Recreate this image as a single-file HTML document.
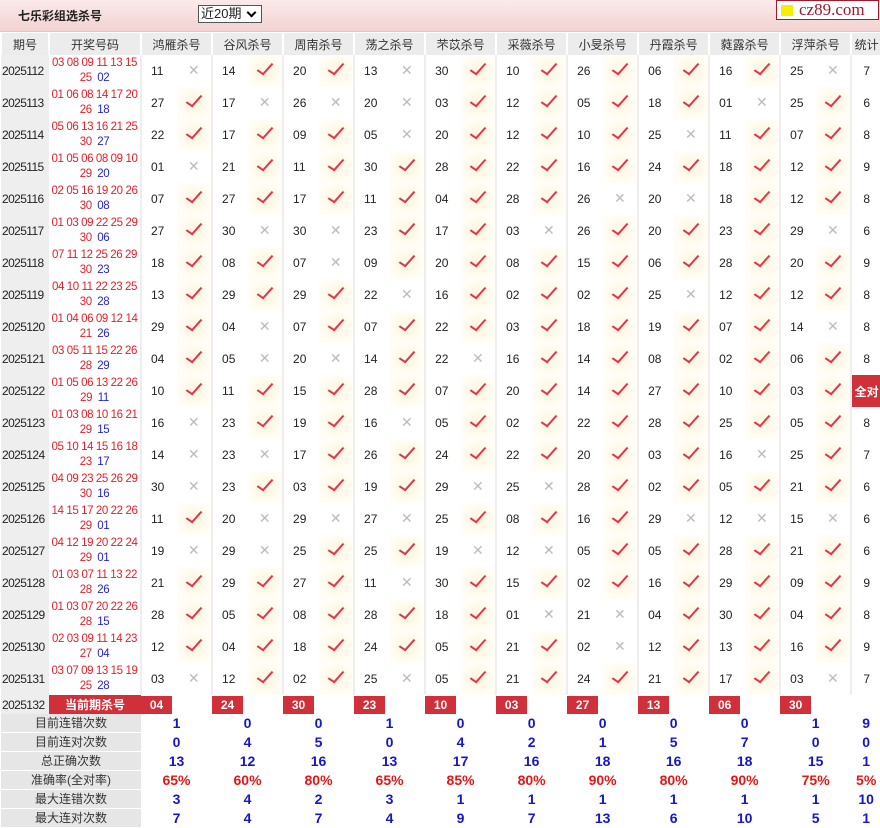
<!DOCTYPE html>
<html><head><meta charset="utf-8"><style>
body{margin:0;width:880px;height:827px;overflow:hidden;background:#fff;font-family:"Liberation Sans","Noto Sans CJK SC",sans-serif;font-size:12px;color:#222}
.top{position:absolute;left:0;top:0;width:880px;height:31px;background:linear-gradient(#fbeaea,#f2d2d2);border-bottom:1px solid #e3c4c4}
.ttl{position:absolute;left:18px;top:7px;font-size:12px;font-weight:bold;color:#222}
.sel{position:absolute;left:198px;top:5px;border:1px solid #555;background:#fff;font-size:13px;line-height:16px;padding-left:2px;box-sizing:border-box;width:64px;height:18px}
.sel:after{content:"";position:absolute;right:6px;top:3px;width:5px;height:5px;border:solid #000;border-width:0 2px 2px 0;transform:rotate(45deg)}
.logo{position:absolute;left:776px;top:0;width:103px;height:20px;background:#fff;border:1px solid #a0192c;box-sizing:border-box;font-family:"Liberation Serif",serif;font-size:17px;color:#a0192c;line-height:18px;padding-left:22px}
.logo:before{content:"";position:absolute;left:4px;top:4px;width:12px;height:11px;background:#f4f000}
table{position:absolute;left:0;top:33px;border-collapse:collapse;table-layout:fixed;width:880px}
td{padding:0;text-align:center;white-space:nowrap;overflow:hidden}
tr.h td{height:22px;background:#ececec;color:#333;border-left:2px solid #fff}
tr.d td{height:32px}
td.p{background:#eeeeee;text-align:left;padding-left:1px;font-size:12px;letter-spacing:-0.6px}
td.k{font-size:11.5px;line-height:15px;background:#fff;letter-spacing:-0.4px}
.r{color:#e0202a}.b{color:#2525cc}
td.n{text-align:left;padding-left:9px;border-left:2px solid #eee}
td.v,td.x{position:relative}
td.v{background:radial-gradient(ellipse at 50% 50%,#fff8e6 30%,#fffdf5 70%)}
td.v:after{content:"";display:inline-block;width:6px;height:13px;border:solid #e0354e;border-width:0 2px 2px 0;transform:rotate(42deg) skewY(-8deg);margin-top:-4px}
td.x:after{content:"\2715";color:#bbb;font-family:"DejaVu Sans",sans-serif;font-size:14px}
td.t{border-left:2px solid #eee}
td.all{background:#d0303a;color:#fff;font-weight:bold;border-left:2px solid #eee}
tr.c td{height:19px}
td.cur{background:#d0303a;color:#fff;font-weight:bold}
.bx{display:inline-block;width:31px;height:18px;line-height:18px;background:#d0303a;color:#fff;font-weight:bold;text-align:center;float:left}
tr.s td{height:18px;line-height:18px;color:#1616c8;font-weight:bold;font-size:14px}
tr.s td.l{background:#e6e6e6;color:#333;font-weight:normal;font-size:12px;border-bottom:1px solid #fff}
tr.s.rt td{color:#e01818}
tr.s.rt td.l{color:#333}
</style></head><body>
<div class="top"><div class="ttl">七乐彩组选杀号</div><div class="sel">近20期</div></div>
<div class="logo">cz89.com</div>
<table>
<colgroup><col style="width:48px"><col style="width:92px"><col span="20" style="width:35.5px"><col style="width:30px"></colgroup>
<tr class="h"><td>期号</td><td>开奖号码</td><td colspan="2">鸿雁杀号</td><td colspan="2">谷风杀号</td><td colspan="2">周南杀号</td><td colspan="2">荡之杀号</td><td colspan="2">芣苡杀号</td><td colspan="2">采薇杀号</td><td colspan="2">小旻杀号</td><td colspan="2">丹霞杀号</td><td colspan="2">蕤露杀号</td><td colspan="2">浮萍杀号</td><td>统计</td></tr>
<tr class="d"><td class="p">2025112</td><td class="k"><span class="r">03 08 09 11 13 15</span><br><span class="r">25</span>&nbsp; <span class="b">02</span></td><td class="n">11</td><td class="x"></td><td class="n">14</td><td class="v"></td><td class="n">20</td><td class="v"></td><td class="n">13</td><td class="x"></td><td class="n">30</td><td class="v"></td><td class="n">10</td><td class="v"></td><td class="n">26</td><td class="v"></td><td class="n">06</td><td class="v"></td><td class="n">16</td><td class="v"></td><td class="n">25</td><td class="x"></td><td class="t">7</td></tr>
<tr class="d"><td class="p">2025113</td><td class="k"><span class="r">01 06 08 14 17 20</span><br><span class="r">26</span>&nbsp; <span class="b">18</span></td><td class="n">27</td><td class="v"></td><td class="n">17</td><td class="x"></td><td class="n">26</td><td class="x"></td><td class="n">20</td><td class="x"></td><td class="n">03</td><td class="v"></td><td class="n">12</td><td class="v"></td><td class="n">05</td><td class="v"></td><td class="n">18</td><td class="v"></td><td class="n">01</td><td class="x"></td><td class="n">25</td><td class="v"></td><td class="t">6</td></tr>
<tr class="d"><td class="p">2025114</td><td class="k"><span class="r">05 06 13 16 21 25</span><br><span class="r">30</span>&nbsp; <span class="b">27</span></td><td class="n">22</td><td class="v"></td><td class="n">17</td><td class="v"></td><td class="n">09</td><td class="v"></td><td class="n">05</td><td class="x"></td><td class="n">20</td><td class="v"></td><td class="n">12</td><td class="v"></td><td class="n">10</td><td class="v"></td><td class="n">25</td><td class="x"></td><td class="n">11</td><td class="v"></td><td class="n">07</td><td class="v"></td><td class="t">8</td></tr>
<tr class="d"><td class="p">2025115</td><td class="k"><span class="r">01 05 06 08 09 10</span><br><span class="r">29</span>&nbsp; <span class="b">20</span></td><td class="n">01</td><td class="x"></td><td class="n">21</td><td class="v"></td><td class="n">11</td><td class="v"></td><td class="n">30</td><td class="v"></td><td class="n">28</td><td class="v"></td><td class="n">22</td><td class="v"></td><td class="n">16</td><td class="v"></td><td class="n">24</td><td class="v"></td><td class="n">18</td><td class="v"></td><td class="n">12</td><td class="v"></td><td class="t">9</td></tr>
<tr class="d"><td class="p">2025116</td><td class="k"><span class="r">02 05 16 19 20 26</span><br><span class="r">30</span>&nbsp; <span class="b">08</span></td><td class="n">07</td><td class="v"></td><td class="n">27</td><td class="v"></td><td class="n">17</td><td class="v"></td><td class="n">11</td><td class="v"></td><td class="n">04</td><td class="v"></td><td class="n">28</td><td class="v"></td><td class="n">26</td><td class="x"></td><td class="n">20</td><td class="x"></td><td class="n">18</td><td class="v"></td><td class="n">12</td><td class="v"></td><td class="t">8</td></tr>
<tr class="d"><td class="p">2025117</td><td class="k"><span class="r">01 03 09 22 25 29</span><br><span class="r">30</span>&nbsp; <span class="b">06</span></td><td class="n">27</td><td class="v"></td><td class="n">30</td><td class="x"></td><td class="n">30</td><td class="x"></td><td class="n">23</td><td class="v"></td><td class="n">17</td><td class="v"></td><td class="n">03</td><td class="x"></td><td class="n">26</td><td class="v"></td><td class="n">20</td><td class="v"></td><td class="n">23</td><td class="v"></td><td class="n">29</td><td class="x"></td><td class="t">6</td></tr>
<tr class="d"><td class="p">2025118</td><td class="k"><span class="r">07 11 12 25 26 29</span><br><span class="r">30</span>&nbsp; <span class="b">23</span></td><td class="n">18</td><td class="v"></td><td class="n">08</td><td class="v"></td><td class="n">07</td><td class="x"></td><td class="n">09</td><td class="v"></td><td class="n">20</td><td class="v"></td><td class="n">08</td><td class="v"></td><td class="n">15</td><td class="v"></td><td class="n">06</td><td class="v"></td><td class="n">28</td><td class="v"></td><td class="n">20</td><td class="v"></td><td class="t">9</td></tr>
<tr class="d"><td class="p">2025119</td><td class="k"><span class="r">04 10 11 22 23 25</span><br><span class="r">30</span>&nbsp; <span class="b">28</span></td><td class="n">13</td><td class="v"></td><td class="n">29</td><td class="v"></td><td class="n">29</td><td class="v"></td><td class="n">22</td><td class="x"></td><td class="n">16</td><td class="v"></td><td class="n">02</td><td class="v"></td><td class="n">02</td><td class="v"></td><td class="n">25</td><td class="x"></td><td class="n">12</td><td class="v"></td><td class="n">12</td><td class="v"></td><td class="t">8</td></tr>
<tr class="d"><td class="p">2025120</td><td class="k"><span class="r">01 04 06 09 12 14</span><br><span class="r">21</span>&nbsp; <span class="b">26</span></td><td class="n">29</td><td class="v"></td><td class="n">04</td><td class="x"></td><td class="n">07</td><td class="v"></td><td class="n">07</td><td class="v"></td><td class="n">22</td><td class="v"></td><td class="n">03</td><td class="v"></td><td class="n">18</td><td class="v"></td><td class="n">19</td><td class="v"></td><td class="n">07</td><td class="v"></td><td class="n">14</td><td class="x"></td><td class="t">8</td></tr>
<tr class="d"><td class="p">2025121</td><td class="k"><span class="r">03 05 11 15 22 26</span><br><span class="r">28</span>&nbsp; <span class="b">29</span></td><td class="n">04</td><td class="v"></td><td class="n">05</td><td class="x"></td><td class="n">20</td><td class="x"></td><td class="n">14</td><td class="v"></td><td class="n">22</td><td class="x"></td><td class="n">16</td><td class="v"></td><td class="n">14</td><td class="v"></td><td class="n">08</td><td class="v"></td><td class="n">02</td><td class="v"></td><td class="n">06</td><td class="v"></td><td class="t">8</td></tr>
<tr class="d"><td class="p">2025122</td><td class="k"><span class="r">01 05 06 13 22 26</span><br><span class="r">29</span>&nbsp; <span class="b">11</span></td><td class="n">10</td><td class="v"></td><td class="n">11</td><td class="v"></td><td class="n">15</td><td class="v"></td><td class="n">28</td><td class="v"></td><td class="n">07</td><td class="v"></td><td class="n">20</td><td class="v"></td><td class="n">14</td><td class="v"></td><td class="n">27</td><td class="v"></td><td class="n">10</td><td class="v"></td><td class="n">03</td><td class="v"></td><td class="all">全对</td></tr>
<tr class="d"><td class="p">2025123</td><td class="k"><span class="r">01 03 08 10 16 21</span><br><span class="r">29</span>&nbsp; <span class="b">15</span></td><td class="n">16</td><td class="x"></td><td class="n">23</td><td class="v"></td><td class="n">19</td><td class="v"></td><td class="n">16</td><td class="x"></td><td class="n">05</td><td class="v"></td><td class="n">02</td><td class="v"></td><td class="n">22</td><td class="v"></td><td class="n">28</td><td class="v"></td><td class="n">25</td><td class="v"></td><td class="n">05</td><td class="v"></td><td class="t">8</td></tr>
<tr class="d"><td class="p">2025124</td><td class="k"><span class="r">05 10 14 15 16 18</span><br><span class="r">23</span>&nbsp; <span class="b">17</span></td><td class="n">14</td><td class="x"></td><td class="n">23</td><td class="x"></td><td class="n">17</td><td class="v"></td><td class="n">26</td><td class="v"></td><td class="n">24</td><td class="v"></td><td class="n">22</td><td class="v"></td><td class="n">20</td><td class="v"></td><td class="n">03</td><td class="v"></td><td class="n">16</td><td class="x"></td><td class="n">25</td><td class="v"></td><td class="t">7</td></tr>
<tr class="d"><td class="p">2025125</td><td class="k"><span class="r">04 09 23 25 26 29</span><br><span class="r">30</span>&nbsp; <span class="b">16</span></td><td class="n">30</td><td class="x"></td><td class="n">23</td><td class="v"></td><td class="n">03</td><td class="v"></td><td class="n">19</td><td class="v"></td><td class="n">29</td><td class="x"></td><td class="n">25</td><td class="x"></td><td class="n">28</td><td class="v"></td><td class="n">02</td><td class="v"></td><td class="n">05</td><td class="v"></td><td class="n">21</td><td class="v"></td><td class="t">6</td></tr>
<tr class="d"><td class="p">2025126</td><td class="k"><span class="r">14 15 17 20 22 26</span><br><span class="r">29</span>&nbsp; <span class="b">01</span></td><td class="n">11</td><td class="v"></td><td class="n">20</td><td class="x"></td><td class="n">29</td><td class="x"></td><td class="n">27</td><td class="x"></td><td class="n">25</td><td class="v"></td><td class="n">08</td><td class="v"></td><td class="n">16</td><td class="v"></td><td class="n">29</td><td class="x"></td><td class="n">12</td><td class="x"></td><td class="n">15</td><td class="x"></td><td class="t">6</td></tr>
<tr class="d"><td class="p">2025127</td><td class="k"><span class="r">04 12 19 20 22 24</span><br><span class="r">29</span>&nbsp; <span class="b">01</span></td><td class="n">19</td><td class="x"></td><td class="n">29</td><td class="x"></td><td class="n">25</td><td class="v"></td><td class="n">25</td><td class="v"></td><td class="n">19</td><td class="x"></td><td class="n">12</td><td class="x"></td><td class="n">05</td><td class="v"></td><td class="n">05</td><td class="v"></td><td class="n">28</td><td class="v"></td><td class="n">21</td><td class="v"></td><td class="t">6</td></tr>
<tr class="d"><td class="p">2025128</td><td class="k"><span class="r">01 03 07 11 13 22</span><br><span class="r">28</span>&nbsp; <span class="b">26</span></td><td class="n">21</td><td class="v"></td><td class="n">29</td><td class="v"></td><td class="n">27</td><td class="v"></td><td class="n">11</td><td class="x"></td><td class="n">30</td><td class="v"></td><td class="n">15</td><td class="v"></td><td class="n">02</td><td class="v"></td><td class="n">16</td><td class="v"></td><td class="n">29</td><td class="v"></td><td class="n">09</td><td class="v"></td><td class="t">9</td></tr>
<tr class="d"><td class="p">2025129</td><td class="k"><span class="r">01 03 07 20 22 26</span><br><span class="r">28</span>&nbsp; <span class="b">15</span></td><td class="n">28</td><td class="v"></td><td class="n">05</td><td class="v"></td><td class="n">08</td><td class="v"></td><td class="n">28</td><td class="v"></td><td class="n">18</td><td class="v"></td><td class="n">01</td><td class="x"></td><td class="n">21</td><td class="x"></td><td class="n">04</td><td class="v"></td><td class="n">30</td><td class="v"></td><td class="n">04</td><td class="v"></td><td class="t">8</td></tr>
<tr class="d"><td class="p">2025130</td><td class="k"><span class="r">02 03 09 11 14 23</span><br><span class="r">27</span>&nbsp; <span class="b">04</span></td><td class="n">12</td><td class="v"></td><td class="n">04</td><td class="v"></td><td class="n">18</td><td class="v"></td><td class="n">24</td><td class="v"></td><td class="n">05</td><td class="v"></td><td class="n">21</td><td class="v"></td><td class="n">02</td><td class="x"></td><td class="n">12</td><td class="v"></td><td class="n">13</td><td class="v"></td><td class="n">16</td><td class="v"></td><td class="t">9</td></tr>
<tr class="d"><td class="p">2025131</td><td class="k"><span class="r">03 07 09 13 15 19</span><br><span class="r">25</span>&nbsp; <span class="b">28</span></td><td class="n">03</td><td class="x"></td><td class="n">12</td><td class="v"></td><td class="n">02</td><td class="v"></td><td class="n">25</td><td class="x"></td><td class="n">05</td><td class="v"></td><td class="n">21</td><td class="v"></td><td class="n">24</td><td class="v"></td><td class="n">21</td><td class="v"></td><td class="n">17</td><td class="v"></td><td class="n">03</td><td class="x"></td><td class="t">7</td></tr>
<tr class="c"><td class="p">2025132</td><td class="cur">当前期杀号</td><td colspan="2"><span class="bx">04</span></td><td colspan="2"><span class="bx">24</span></td><td colspan="2"><span class="bx">30</span></td><td colspan="2"><span class="bx">23</span></td><td colspan="2"><span class="bx">10</span></td><td colspan="2"><span class="bx">03</span></td><td colspan="2"><span class="bx">27</span></td><td colspan="2"><span class="bx">13</span></td><td colspan="2"><span class="bx">06</span></td><td colspan="2"><span class="bx">30</span></td><td></td></tr>
<tr class="s"><td class="l" colspan="2">目前连错次数</td><td colspan="2">1</td><td colspan="2">0</td><td colspan="2">0</td><td colspan="2">1</td><td colspan="2">0</td><td colspan="2">0</td><td colspan="2">0</td><td colspan="2">0</td><td colspan="2">0</td><td colspan="2">1</td><td>9</td></tr>
<tr class="s"><td class="l" colspan="2">目前连对次数</td><td colspan="2">0</td><td colspan="2">4</td><td colspan="2">5</td><td colspan="2">0</td><td colspan="2">4</td><td colspan="2">2</td><td colspan="2">1</td><td colspan="2">5</td><td colspan="2">7</td><td colspan="2">0</td><td>0</td></tr>
<tr class="s"><td class="l" colspan="2">总正确次数</td><td colspan="2">13</td><td colspan="2">12</td><td colspan="2">16</td><td colspan="2">13</td><td colspan="2">17</td><td colspan="2">16</td><td colspan="2">18</td><td colspan="2">16</td><td colspan="2">18</td><td colspan="2">15</td><td>1</td></tr>
<tr class="s rt"><td class="l" colspan="2">准确率(全对率)</td><td colspan="2">65%</td><td colspan="2">60%</td><td colspan="2">80%</td><td colspan="2">65%</td><td colspan="2">85%</td><td colspan="2">80%</td><td colspan="2">90%</td><td colspan="2">80%</td><td colspan="2">90%</td><td colspan="2">75%</td><td>5%</td></tr>
<tr class="s"><td class="l" colspan="2">最大连错次数</td><td colspan="2">3</td><td colspan="2">4</td><td colspan="2">2</td><td colspan="2">3</td><td colspan="2">1</td><td colspan="2">1</td><td colspan="2">1</td><td colspan="2">1</td><td colspan="2">1</td><td colspan="2">1</td><td>10</td></tr>
<tr class="s"><td class="l" colspan="2">最大连对次数</td><td colspan="2">7</td><td colspan="2">4</td><td colspan="2">7</td><td colspan="2">4</td><td colspan="2">9</td><td colspan="2">7</td><td colspan="2">13</td><td colspan="2">6</td><td colspan="2">10</td><td colspan="2">5</td><td>1</td></tr>
</table>
</body></html>
